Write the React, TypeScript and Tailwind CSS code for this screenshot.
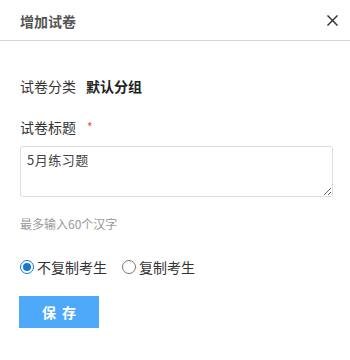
import { useState } from 'react'

const font = { fontFamily: '"Microsoft YaHei", "Noto Sans CJK SC", "Liberation Sans", sans-serif' }

function Radio({ checked, label, onClick }: { checked: boolean; label: string; onClick: () => void }) {
  return (
    <label className="flex items-center gap-[3px] cursor-pointer" onClick={onClick}>
      {checked ? (
        <span className="w-[14px] h-[14px] rounded-full border border-[#1677d2] flex items-center justify-center">
          <span className="w-[8px] h-[8px] rounded-full bg-[#1677d2]" />
        </span>
      ) : (
        <span className="w-[14px] h-[14px] rounded-full border border-[#767676]" />
      )}
      <span className="text-[14px] leading-[20px] text-[#333]">{label}</span>
    </label>
  )
}

export default function App() {
  const [copy, setCopy] = useState(false)
  const [title, setTitle] = useState('5月练习题')

  return (
    <div className="w-[350px] h-[360px] bg-white" style={font}>
      <div className="h-[41px] border-b border-[#d4d4d4] flex items-center justify-between pl-5 pr-[11px]">
        <h1 className="text-[14px] font-bold text-[#555] leading-[20px] pt-[1px]">增加试卷</h1>
        <button className="w-[14px] h-[14px] flex items-center justify-center">
          <svg width="11" height="11" viewBox="0 0 12 12" fill="none" stroke="#333" strokeWidth="1.6">
            <line x1="0.5" y1="0.5" x2="11.5" y2="11.5" />
            <line x1="11.5" y1="0.5" x2="0.5" y2="11.5" />
          </svg>
        </button>
      </div>

      <div className="px-5">
        {/* 分类 */}
        <div className="mt-[35px] flex items-center gap-[10px] text-[14px] leading-[20px] text-[#333]">
          <span>试卷分类</span>
          <span className="font-bold text-[#222]">默认分组</span>
        </div>

        {/* 标题 */}
        <div className="mt-[21px] flex items-center text-[14px] leading-[20px] text-[#333]">
          <span>试卷标题</span>
          <span className="ml-[11px] text-[#f44] text-[12px]">*</span>
        </div>
        <textarea
          className="mt-[9px] block w-[313px] h-[51px] border border-[#ddd] rounded-[3px] px-[6px] py-[4px] text-[13px] leading-[18px] tracking-[0.5px] text-[#444] outline-none"
          value={title}
          onChange={e => setTitle(e.target.value)}
        />
        <p className="mt-[18px] text-[12px] leading-[17px] text-[#999]">最多输入60个汉字</p>

        {/* 复制考生 */}
        <div className="mt-[25px] flex items-center gap-[15px]">
          <Radio checked={!copy} label="不复制考生" onClick={() => setCopy(false)} />
          <Radio checked={copy} label="复制考生" onClick={() => setCopy(true)} />
        </div>

        <button className="mt-[19px] ml-[-1px] w-[80px] h-[32px] bg-[#4fa9fb] text-white text-[14px] font-bold tracking-[6px] pl-[6px]">
          保存
        </button>
      </div>
    </div>
  )
}
